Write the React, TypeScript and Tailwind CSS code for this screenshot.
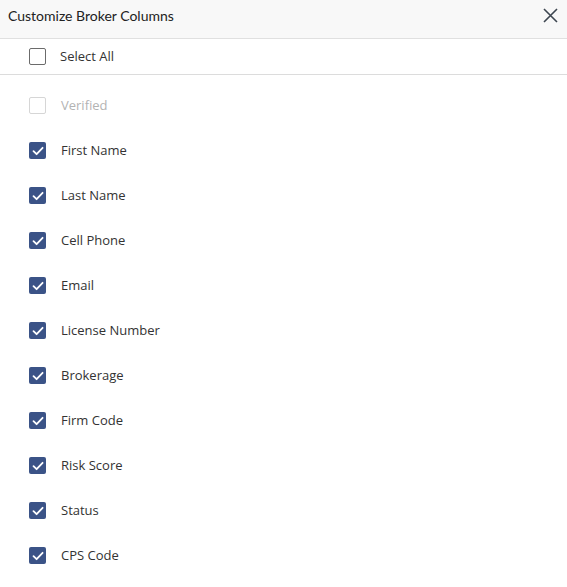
import React from "react";

const items = [
  "First Name",
  "Last Name",
  "Cell Phone",
  "Email",
  "License Number",
  "Brokerage",
  "Firm Code",
  "Risk Score",
  "Status",
  "CPS Code",
];

function Checked() {
  return (
    <span className="flex h-[17px] w-[17px] items-center justify-center rounded-[2px] bg-[#3b5387]">
      <svg width="14" height="14" viewBox="0 0 14 14" fill="none">
        <path d="M2.5 7.2 L5.6 10.2 L11.6 3.8" stroke="white" strokeWidth="1.8" strokeLinecap="round" strokeLinejoin="round" />
      </svg>
    </span>
  );
}

export default function App() {
  return (
    <div className="w-[567px] h-[587px] bg-white overflow-hidden" style={{ fontFamily: '"Open Sans", sans-serif' }}>
      <div className="flex h-[39px] items-start justify-between border-b border-[#e0e0e0] bg-[#f8f8f8] pl-[8px] pr-[8px] pt-[6px]">
        <span className="text-[14px] leading-[20px] text-[#222]" style={{ fontFamily: 'Lato, sans-serif' }}>Customize Broker Columns</span>
        <svg width="17" height="17" viewBox="0 0 17 17" fill="none" className="mt-[1px]">
          <path d="M2 2 L15 15 M15 2 L2 15" stroke="#3d4650" strokeWidth="1.6" />
        </svg>
      </div>
      <div className="flex h-[36px] items-center border-b border-[#dcdcdc] pl-[29px]">
        <span className="h-[17px] w-[17px] rounded-[2px] border border-[#6b6b6b] bg-white" />
        <span className="ml-[14px] text-[13px] text-[#333]">Select All</span>
      </div>
      <div className="flex flex-col pl-[29px] pt-[8px]">
        <div className="flex h-[45px] items-center">
          <span className="h-[17px] w-[17px] rounded-[2px] border border-[#d6d6d6] bg-white" />
          <span className="ml-[15px] text-[13px] text-[#b3b3b3]">Verified</span>
        </div>
        {items.map((t) => (
          <div key={t} className="flex h-[45px] items-center">
            <Checked />
            <span className="ml-[15px] text-[13px] text-[#333]">{t}</span>
          </div>
        ))}
      </div>
    </div>
  );
}
